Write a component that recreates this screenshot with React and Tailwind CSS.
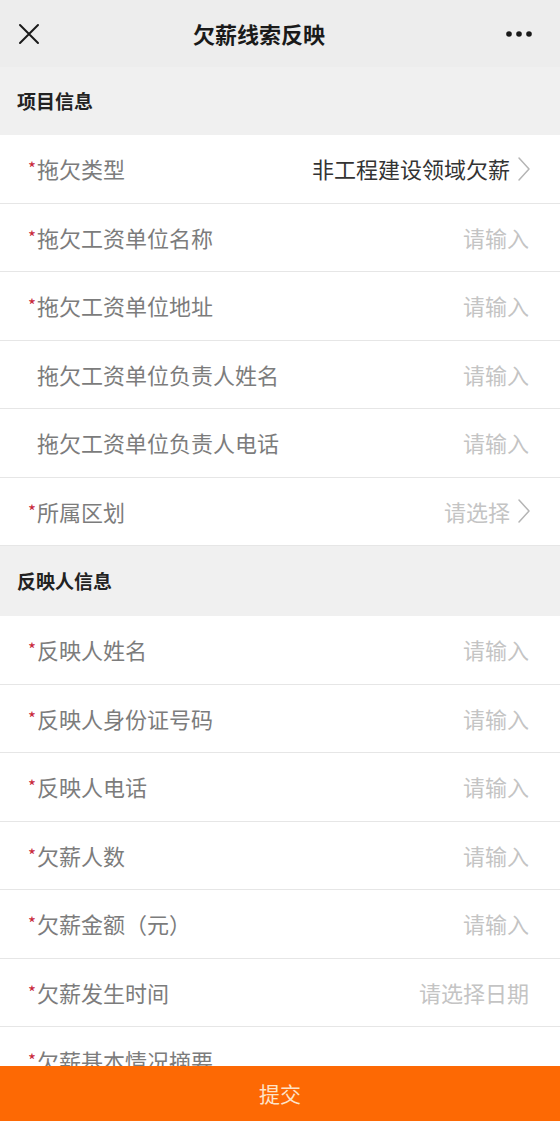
const font = { fontFamily: '"Noto Sans CJK SC", "Noto Sans", sans-serif' }

const projectRows = [
  { label: '拖欠类型', required: true, value: '非工程建设领域欠薪', arrow: true },
  { label: '拖欠工资单位名称', required: true, placeholder: '请输入' },
  { label: '拖欠工资单位地址', required: true, placeholder: '请输入' },
  { label: '拖欠工资单位负责人姓名', placeholder: '请输入' },
  { label: '拖欠工资单位负责人电话', placeholder: '请输入' },
  { label: '所属区划', required: true, placeholder: '请选择', arrow: true },
]

const reporterRows = [
  { label: '反映人姓名', required: true, placeholder: '请输入' },
  { label: '反映人身份证号码', required: true, placeholder: '请输入' },
  { label: '反映人电话', required: true, placeholder: '请输入' },
  { label: '欠薪人数', required: true, placeholder: '请输入' },
  { label: '欠薪金额（元）', required: true, placeholder: '请输入' },
  { label: '欠薪发生时间', required: true, placeholder: '请选择日期' },
  { label: '欠薪基本情况摘要', required: true },
]

const Chevron = () => (
  <svg width="16" height="26" viewBox="0 0 16 26" fill="none" className="ml-[6px] -mr-[3px]">
    <path d="M3 2 L13 13 L3 24" stroke="#b5b5b5" strokeWidth="1.5" strokeLinecap="round" strokeLinejoin="round" />
  </svg>
)

const Row = ({ row }) => (
  <div className="h-[68.5px] shrink-0 flex items-center justify-between bg-white border-b border-[#e6e6e6] pl-[28px] pr-[31px]">
    <div className="flex items-center text-[22px] text-[#7c7c7c]">
      <span className={row.required ? 'text-[#c8283a] text-[17px] -mt-[2px] w-[9px]' : 'w-[9px]'}>
        {row.required ? '*' : ''}
      </span>
      <span>{row.label}</span>
    </div>
    <div className="flex items-center text-[22px]">
      {row.value && <span className="text-[#333333]">{row.value}</span>}
      {row.placeholder && <span className="text-[#c4c4c4]">{row.placeholder}</span>}
      {row.arrow && <Chevron />}
    </div>
  </div>
)

const Section = ({ title, h }) => (
  <div className={`${h} shrink-0 flex items-center bg-[#f0f0f0] px-[17px] text-[19px] font-bold text-[#222222]`}>
    {title}
  </div>
)

export default function App() {
  return (
    <div className="h-screen w-full flex flex-col overflow-hidden bg-white" style={font}>
      {/* top bar */}
      <header className="h-[67px] shrink-0 flex items-center bg-[#ededed] px-[17px]">
        <svg width="24" height="24" viewBox="0 0 24 24" fill="none">
          <path d="M3 3 L21 21 M21 3 L3 21" stroke="#1a1a1a" strokeWidth="2" strokeLinecap="round" />
        </svg>
        <div className="flex-1 flex justify-center pr-[28px]">
          <h1 className="text-[22px] font-bold text-[#1a1a1a]">欠薪线索反映</h1>
        </div>
        <svg width="28" height="8" viewBox="0 0 28 8" className="mr-[10px]">
          <circle cx="4" cy="4" r="2.8" fill="#1a1a1a" />
          <circle cx="14" cy="4" r="2.8" fill="#1a1a1a" />
          <circle cx="24" cy="4" r="2.8" fill="#1a1a1a" />
        </svg>
      </header>

      <main className="flex-1 flex flex-col overflow-hidden">
        <Section title="项目信息" h="h-[68px]" />
        {projectRows.map((r) => (
          <Row key={r.label} row={r} />
        ))}
        <Section title="反映人信息" h="h-[70px]" />
        {reporterRows.map((r) => (
          <Row key={r.label} row={r} />
        ))}
      </main>

      <button className="h-[55px] shrink-0 w-full bg-[#fd6904] text-[#fde3c8] text-[21px]">
        提交
      </button>
    </div>
  )
}
